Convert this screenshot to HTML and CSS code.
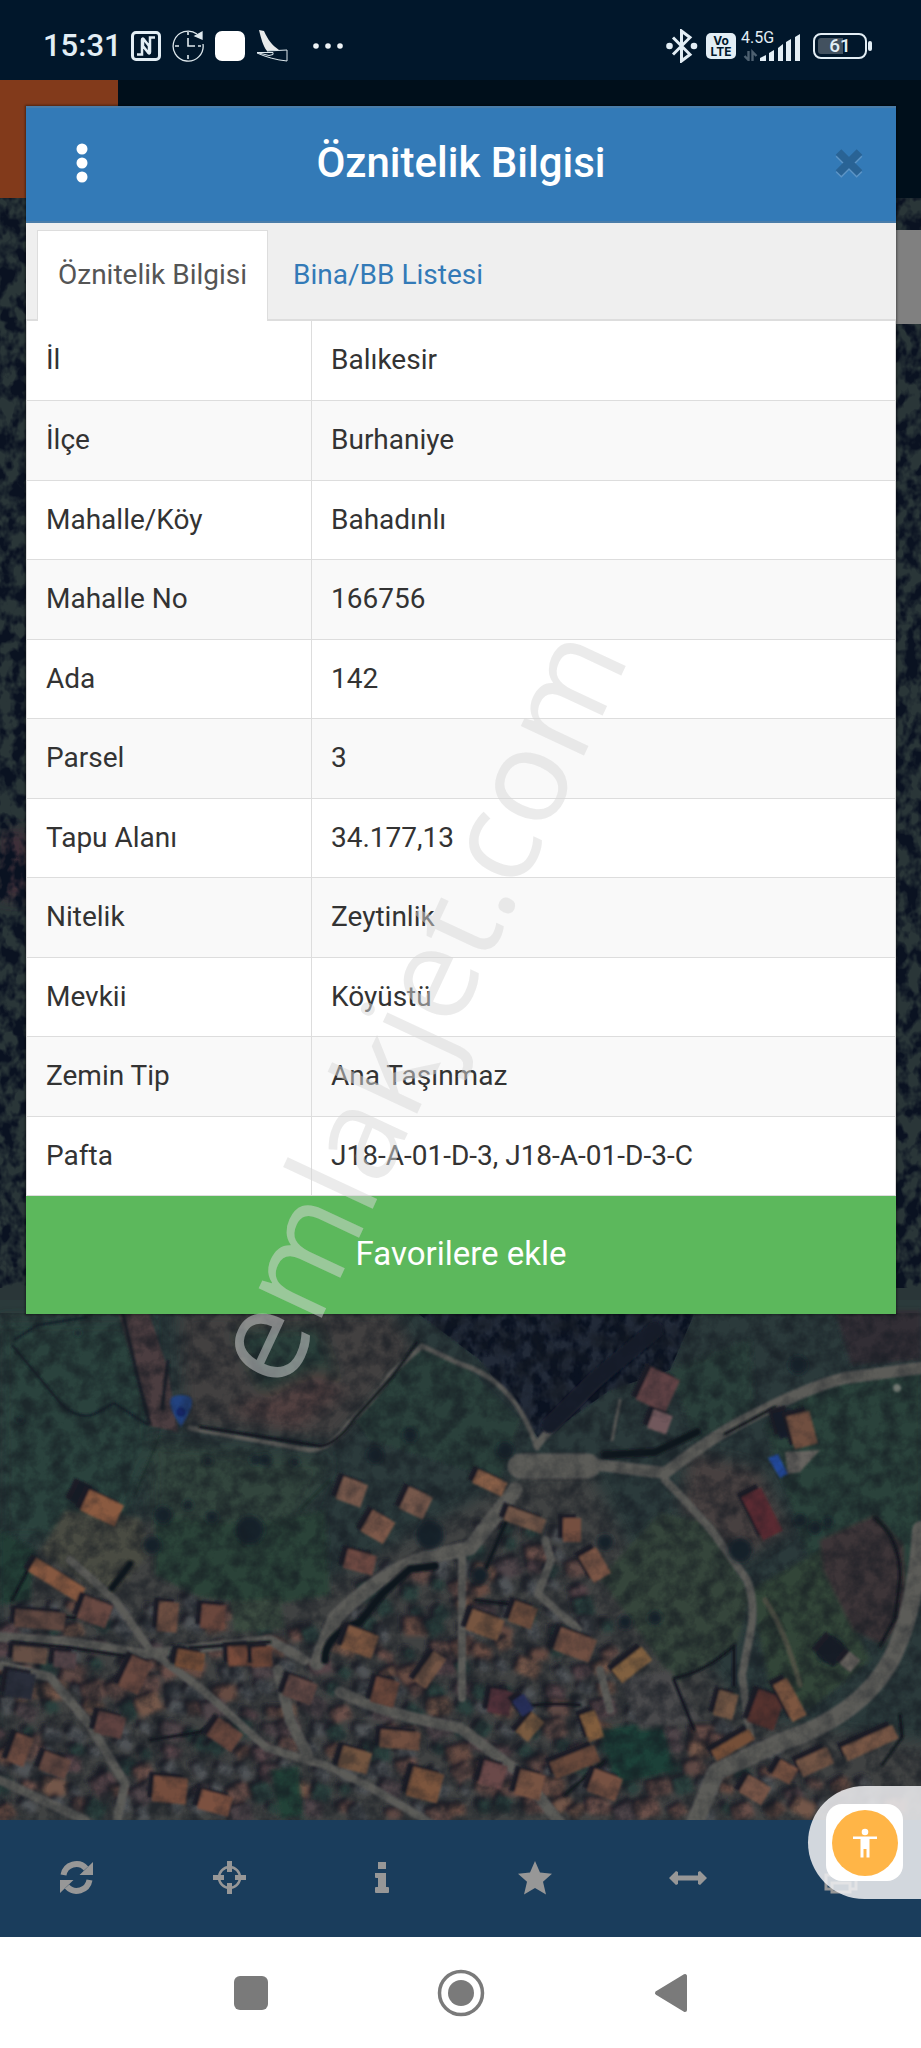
FILE: index.html
```html
<!DOCTYPE html>
<html lang="tr">
<head>
<meta charset="utf-8">
<meta name="viewport" content="width=device-width, initial-scale=1">
<title>Öznitelik Bilgisi</title>
<link rel="stylesheet" href="styles.css">
</head>
<body>
<header class="status">
  <div class="status-left">
    <span class="clock">15:31</span>
    <svg width="30" height="30" viewBox="0 0 30 30"><rect x="1.5" y="1.5" width="27" height="27" rx="3.5" fill="none" stroke="#e3eef5" stroke-width="3"/><path d="M6 23.500h5V9q0-2.500 2-.5l5 6.500v6M24 6.500h-5V21q0 2.500-2 .5l-5-6.500V9" fill="none" stroke="#e3eef5" stroke-width="2.500"/></svg>
    <svg class="gap-icon" width="32" height="32" viewBox="0 0 32 32" fill="none" stroke="#dfe9ee" stroke-width="1.300"><path d="M25 4A15 15 0 1 0 31 14"/><path d="M16 8v8h7M16 2v3M16 25v4M3 16h4M26 16h3" stroke-width="1.600"/><path d="M23 6l7-4v7z" fill="#dfe9ee"/></svg>
    <svg class="gap-icon" width="30" height="30" viewBox="0 0 30 30"><rect width="30" height="30" rx="7" fill="#fff"/></svg>
    <svg class="gap-icon" width="32" height="32" viewBox="0 0 32 32"><path d="M3 0l5 1c4 9 8 14 15 19l-12 1C7 16 5 8 3 0z" fill="#e8eaea"/><path d="M1 22.500h16v2l-4 1zM11 21l20-1v11C20 30 10 27 1 23" fill="none" stroke="#dfe9ee" stroke-width="1"/></svg>
    <svg class="gap-dots" width="30" height="30" viewBox="0 0 30 30" fill="#eef3f6"><circle cx="3" cy="15" r="2.800"/><circle cx="15" cy="15" r="2.800"/><circle cx="27" cy="15" r="2.800"/></svg>
  </div>
  <div class="status-right">
    <svg width="32" height="34" viewBox="0 0 32 34" fill="none" stroke="#e3eef5" stroke-width="3"><path d="M7 8.500l17 17-8.500 6.500V2L24 8.500 7 25.500"/><circle cx="3.500" cy="17" r="3.300" fill="#e3eef5" stroke="none"/><circle cx="28" cy="17" r="3.300" fill="#e3eef5" stroke="none"/></svg>
    <span class="volte"><span>Vo</span><span>LTE</span></span>
    <span class="signal">
      <span class="net">4.5G</span>
      <svg width="60" height="30" viewBox="0 0 60 30"><g fill="#e3eef5"><path d="M19 30v-3l6-3v6zM28 30v-8l5-3v11zM37 30V17l5-4v17zM45 30V11l5-3v22zM54 30V6l5-3v27z"/></g><path d="M7.500 20v9l-4-4M11.500 30v-9l4 4" fill="none" stroke="#4d6070" stroke-width="2.400"/></svg>
    </span>
    <span class="battery"><span>61</span></span>
  </div>
</header>

<main class="app">
  <div class="appbar"><span class="appbar-logo"></span></div>
  <div class="map">
    <svg id="map" class="map-art" viewBox="0 198 921 1622" preserveAspectRatio="xMidYMax slice" aria-hidden="true">
      <defs>
        <filter id="forest" x="0" y="0" width="1" height="1" color-interpolation-filters="sRGB"><feTurbulence type="fractalNoise" baseFrequency=".075 .06" numOctaves="3" seed="4"/><feColorMatrix values="0 0 0 0 .04  0 0 0 0 .07  0 0 0 0 .13  3.5 2 0 0 -2.3"/></filter>
        <filter id="grain" x="0" y="0" width="1" height="1" color-interpolation-filters="sRGB"><feTurbulence type="fractalNoise" baseFrequency=".06" numOctaves="4" seed="9"/><feColorMatrix values="0 0 0 0 .08  0 0 0 0 .10  0 0 0 0 .13  2 1 0 0 -1.200"/></filter>
        <filter id="soft"><feGaussianBlur stdDeviation="1"/></filter>
        <filter id="softer"><feGaussianBlur stdDeviation="2"/></filter>
        <filter id="wide"><feGaussianBlur stdDeviation="7"/></filter>
        <clipPath id="grove"><path d="M400 1300h300l-30 70-60 20-70 50-60-80z"/></clipPath>
      </defs>
      <rect y="198" width="921" height="1622" fill="#2b3a3b"/>
      <rect y="198" width="921" height="1102" fill="#2a3638"/>
      <g filter="url(#wide)">
        <path d="M0 1320h150v130l-30 90H0z" fill="#2b423e"/>
        <path d="M180 1310h210l25 40-80 90-150-15z" fill="#43413f"/>
        <path d="M230 1330l90-5 20 60-70 25z" fill="#2b403a"/>
        <path d="M230 1410l90-40 25 20-50 40z" fill="#51413f"/>
        <path d="M150 1440l180 20-40 90-140 20z" fill="#32453d"/>
        <path d="M0 1590l60-60 100-10 60 40 110 20 200-110h60l60 120 100 130 231 30v80H0z" fill="#414342"/>
        <path d="M0 830h30v70H0z" fill="#3d2e38"/>
        <path d="M690 1450l70 20 30 60-50 30-60-50z" fill="#46413f"/>
      </g>
      <rect y="198" width="921" height="1090" filter="url(#forest)"/>
      <g filter="url(#soft)">
        <path d="M400 1300h300l-30 70-60 20-70 50-60-80z" fill="#222c37"/>
        <path d="M420 1345l50 25 50 50-20 60-130-40-15-20z" fill="#293f3b"/>
        <path d="M118 1310h30l20 60 10 62-28-6z" fill="#4b3e40"/>
        <path d="M122 1310l14 60 14 55M168 1360l-6 50" fill="none" stroke="#1b2029" stroke-width="4"/>
        <path d="M14 1340l24-15 50-8M12 1345l50 60q20 18 38 6l14-8 34 22" fill="none" stroke="#16242a" stroke-width="3"/>
        <path d="M160 1435l-25 60M300 1510l30-30" fill="none" stroke="#20322f" stroke-width="2"/>
      </g>
      <g clip-path="url(#grove)"><rect x="400" y="1300" width="300" height="140" filter="url(#forest)"/></g>
      <g id="village" filter="url(#softer)"></g>
      <g filter="url(#softer)">
        <path d="M155 1515l95 10 75-15 5 85-60 10-70-8-45-22z" fill="#2b4339"/>
        <path d="M0 1530l35 20-5 50-30 5z" fill="#203e36"/>
        <path d="M65 1510l75 8 10 35-40 45-70-45z" fill="#4a4b42"/>
        <path d="M600 1578l60-65 50 10 40 70-12 50-62 40-40-55z" fill="#36443b"/>
        <path d="M670 1370l80-30 5 70-60 32z" fill="#2b403b"/>
        <path d="M765 1425l65-45 91-10v230l-40 50-20-75-50-10z" fill="#29423a"/>
        <path d="M750 1590l70-40 50 110-60 50-40-20z" fill="#314439"/>
        <path d="M820 1540l55-25 28 30 5 70-25 30-30-15-30-60z" fill="#3d3437"/>
        <path d="M835 1310h86v50l-70 5z" fill="#302e36"/>
        <path d="M600 1730l60-10 15 50-60 15z" fill="#1e4037"/>
        <path d="M270 1770l28-4 5 48-22 5z" fill="#214337"/>
        <path d="M230 1602l50-4 5 30-50 5z" fill="#3b4b41"/>
        <path d="M620 1680l50-10 30 50-60 10z" fill="#4a4a4b"/>
      </g>
      <rect y="1313" width="921" height="507" filter="url(#grain)" opacity=".4"/>
      <g fill="none" stroke="#5c5b59" stroke-linecap="round" stroke-linejoin="round" filter="url(#soft)">
        <path d="M190 1428l120 22q20 0 40-28 28-26 40-48l32-28 38 18q55 16 77 84" stroke-width="5"/>
        <path d="M537 1445q20-25 78-80" stroke-width="8"/>
        <path d="M525 1470l75-5 65 8q50-38 80-53 60-32 100-42l76-10" stroke-width="12"/>
        <path d="M520 1466h68" stroke-width="25"/>
        <path d="M665 1480q30 30 50 55l32 45q10 25 2 60l-7 35 8 60" stroke-width="8"/>
        <path d="M515 1490l-45 58-45 10q-45 15-90 60l-18 45" stroke-width="15"/>
        <path d="M0 1637l70 5 75 12 125-14 35 20" stroke-width="10"/>
        <path d="M70 1560l45 40 35 50 55 42 62 56 60 18 45 22 60 36" stroke-width="8"/>
        <path d="M0 1665l50 12 40 48 35 58-8 37M0 1780l85 40" stroke-width="9"/>
        <path d="M278 1670l12 50 18 35" stroke-width="11"/>
        <path d="M340 1692q45 22 120 36l60 45 40 50" stroke-width="11"/>
        <path d="M921 1530q-5 80-30 130-30 55-110 82l-65 30-20 48" stroke-width="18"/>
        <path d="M545 1540l6 20-13 34 40 35M462 1558v140M600 1670l10 40" stroke-width="8"/>
        <path d="M765 1600q20 30 35 85" stroke="#4f5144" stroke-width="5"/>
        <path d="M620 1400l-8 40" stroke-width="3"/>
      </g>
      <g fill="none" stroke="#11151f" stroke-linecap="round" filter="url(#soft)">
        <path d="M200 1427l120 19q18-2 35-28l38-42 24-34" stroke-width="3"/>
        <path d="M655 1330l-60 50-45 45" stroke-width="17" stroke="#141a2b"/>
        <path d="M605 1455l50-3 42-20M325 1660q0-25 35-38l22-28 28-25 25-3" stroke-width="8"/>
        <path d="M725 1434l50-27" stroke-width="3"/>
        <path d="M512 1508l-26 60" stroke-width="4"/>
        <path d="M674 1678q30-5 60-32v40M674 1680l20 50M875 1518q25 20 25 60l-5 40-15 28" stroke-width="3"/>
        <path d="M20 1612l55 6 18-14M12 1600l20-38M12 1642l60 6 60 9M190 1648l80-6M150 1740l50-8 16-10M475 1600l50 6M520 1708q20-6 60-3M565 1795l40-35M900 1715l2 22-20 28" stroke-width="3"/>
        <path d="M112 1588l18-24" stroke-width="7"/>
      </g>
      <g id="trees" fill="#14212a" filter="url(#softer)"></g>
      <g id="houses" filter="url(#soft)"></g>
      <g filter="url(#soft)">
        <path d="M768 1458l10-4 10 20-8 4z" fill="#234a9c"/>
        <path d="M785 1452l35-2-20 22-12 2z" fill="#66645f"/>
        <path d="M170 1402q0-7 11-7t11 7q0 8-11 25-11-17-11-25z" fill="#23437f"/>
        <circle cx="181" cy="1412" r="5" fill="#122765"/>
        <circle cx="897" cy="1388" r="4" fill="#747c75"/>
      </g>
      <rect y="1313" width="921" height="507" filter="url(#grain)" opacity=".35"/>
    </svg>
    <span class="map-panel"></span>
  </div>
  <nav class="toolbar" aria-label="Harita araçları">
    <button aria-label="Yenile"><svg width="33" height="33" viewBox="0 0 33 33"><g fill="none" stroke="#979797" stroke-width="6"><path d="M3.500 14A13 13 0 0 1 26 7.500M29.500 19A13 13 0 0 1 7 25.500"/></g><path d="M33 1v13H19.500zM0 32V19h13.500z" fill="#979797"/></svg></button>
    <button aria-label="Konum"><svg width="33" height="33" viewBox="0 0 33 33"><circle cx="16.500" cy="16.500" r="10.500" fill="none" stroke="#979797" stroke-width="2.500"/><path d="M14 0h5v11h-5zM14 22h5v11h-5zM0 14h11v5H0zM22 14h11v5H22z" fill="#979797"/></svg></button>
    <button aria-label="Bilgi"><svg width="16" height="31" viewBox="0 0 16 31"><path d="M4 0h8v7H4zM1 11h11v14h2q1 0 1 1v4q0 1-1 1H2q-1 0-1-1v-4q0-1 1-1h2v-9H2q-1 0-1-1z" fill="#979797"/></svg></button>
    <button aria-label="Favoriler"><svg width="36" height="36" viewBox="0 0 36 36"><path d="M18 1l5 11.500 12 1.200-9 8 3 12.800-11-6.500L7 34.500l3-12.800-9-8 12-1.200z" fill="#979797"/></svg></button>
    <button aria-label="Ölç"><svg width="38" height="16" viewBox="0 0 38 16"><path d="M0 8l7-7 2 1v3.500h20V2l2-1 7 7-7 7-2-1v-3.500H9V14l-2 1z" fill="#979797"/></svg></button>
    <button aria-label="Yazdır"><svg width="34" height="34" viewBox="0 0 34 34" fill="none" stroke="#979797" stroke-width="3"><path d="M8 14V3h18v11M8 28H2V14h30v14h-6M8 22h18v9H8z"/></svg></button>
  </nav>

  <section class="modal" role="dialog" aria-labelledby="title">
    <header class="modal-head">
      <button class="menu" aria-label="Menü"><svg width="12" height="40" viewBox="0 0 12 40" fill="#fff"><circle cx="6" cy="6" r="5.500"/><circle cx="6" cy="20" r="5.500"/><circle cx="6" cy="34" r="5.500"/></svg></button>
      <h1 id="title">Öznitelik Bilgisi</h1>
      <button class="close" aria-label="Kapat"><svg width="30" height="32" viewBox="0 0 30 32"><path d="M4.500 7l21 21M25.500 7l-21 21" stroke="#5c94c6" stroke-width="8"/><path d="M4.500 5l21 21M25.500 5l-21 21" stroke="#296395" stroke-width="8"/></svg></button>
    </header>
    <div class="tabs" role="tablist">
      <button class="tab tab-active" role="tab" aria-selected="true">Öznitelik Bilgisi</button>
      <button class="tab" role="tab" aria-selected="false">Bina/BB Listesi</button>
    </div>
    <table class="props">
      <tbody>
        <tr><th scope="row">İl</th><td>Balıkesir</td></tr>
        <tr><th scope="row">İlçe</th><td>Burhaniye</td></tr>
        <tr><th scope="row">Mahalle/Köy</th><td>Bahadınlı</td></tr>
        <tr><th scope="row">Mahalle No</th><td>166756</td></tr>
        <tr><th scope="row">Ada</th><td>142</td></tr>
        <tr><th scope="row">Parsel</th><td>3</td></tr>
        <tr><th scope="row">Tapu Alanı</th><td>34.177,13</td></tr>
        <tr><th scope="row">Nitelik</th><td>Zeytinlik</td></tr>
        <tr><th scope="row">Mevkii</th><td>Köyüstü</td></tr>
        <tr><th scope="row">Zemin Tip</th><td>Ana Taşınmaz</td></tr>
        <tr><th scope="row">Pafta</th><td>J18-A-01-D-3, J18-A-01-D-3-C</td></tr>
      </tbody>
    </table>
    <button class="favorite">Favorilere ekle</button>
  </section>

  <button class="access" aria-label="Erişilebilirlik">
    <span class="access-tile"><svg width="66" height="66" viewBox="0 0 66 66"><circle cx="33" cy="33" r="33" fill="#ffb547"/><g fill="#fff"><circle cx="33" cy="22" r="3.300"/><path d="M21 26.500h24v2.500h-7.500v18.500H34.500V39h-3v8.500h-3V29H21z"/></g></svg></span>
  </button>
</main>

<nav class="sysnav" aria-label="Sistem">
  <button aria-label="Son uygulamalar"><svg width="34" height="34" viewBox="0 0 34 34"><rect width="34" height="34" rx="6" fill="#7a7a7a"/></svg></button>
  <button aria-label="Ana ekran"><svg width="48" height="48" viewBox="0 0 48 48"><circle cx="24" cy="24" r="21.500" fill="none" stroke="#7a7a7a" stroke-width="3.500"/><circle cx="24" cy="24" r="13" fill="#7a7a7a"/></svg></button>
  <button aria-label="Geri"><svg width="34" height="40" viewBox="0 0 34 40"><path d="M31 3v34L3 20z" fill="#7a7a7a" stroke="#7a7a7a" stroke-width="4" stroke-linejoin="round"/></svg></button>
</nav>
<div class="watermark" aria-hidden="true"><span>emlakjet.com</span></div>
<script src="map.js"></script>
</body>
</html>
```
FILE: styles.css
```css
* { box-sizing: border-box; }
body {
  margin: 0;
  min-height: 100vh;
  display: flex;
  flex-direction: column;
  position: relative;
  overflow-x: hidden;
  font-family: Roboto, "Noto Sans", sans-serif;
  font-size: 28px;
  color: #333;
  background: #fff;
}
button {
  font: inherit;
  color: inherit;
  border: 0;
  padding: 0;
  background: none;
  cursor: pointer;
}
svg { display: block; flex: none; }

/* Status bar */
.status {
  height: 80px;
  padding: 12px 54px 0 43px;
  display: flex;
  justify-content: space-between;
  align-items: center;
  background: #01172b;
  color: #e3eef5;
}
.status-left, .status-right { display: flex; align-items: center; }
.clock { font-size: 31px; font-weight: 500; line-height: 36px; margin-right: 9px; }
.gap-icon { margin-left: 11px; }
.gap-dots { margin-left: 25px; }
.volte {
  width: 30px;
  height: 26px;
  margin-left: 8px;
  border-radius: 5px;
  background: #e3eef5;
  color: #01172b;
  display: flex;
  flex-direction: column;
  justify-content: center;
  align-items: center;
  font: 700 12px/11px Inter, sans-serif;
}
.signal { display: grid; margin-left: 5px; }
.signal > * { grid-area: 1 / 1; }
.net { font-size: 16px; line-height: 14px; }
.battery {
  position: relative;
  width: 54px;
  height: 26px;
  margin-left: 12px;
  border: 2px solid #e3eef5;
  border-radius: 8px;
  display: grid;
  place-items: center;
  background: linear-gradient(90deg, #42515f 56%, transparent 56%) content-box;
  padding: 3px;
  font-size: 19px;
  font-weight: 500;
  line-height: 16px;
}
.battery::after {
  content: "";
  position: absolute;
  right: -7px;
  top: 6px;
  width: 4px;
  height: 10px;
  border-radius: 2px;
  background: #e3eef5;
}

/* Map application */
.app {
  flex: 1;
  position: relative;
  display: flex;
  flex-direction: column;
}
.appbar { height: 118px; display: flex; background: #000f1b; }
.appbar-logo { width: 118px; background: #823a1b; }
.map { flex: 1; position: relative; overflow: hidden; min-height: 1300px; }
.map-art { position: absolute; inset: 0; width: 100%; height: 100%; }
.map-panel { position: absolute; top: 32px; right: 0; width: 60px; height: 94px; background: #808080; }
.toolbar {
  height: 117px;
  padding: 0 4px 2px 0;
  display: grid;
  grid-template-columns: repeat(6, 1fr);
  background: #1a3d5c;
}
.toolbar button { display: grid; place-items: center; }

/* Dialog */
.modal {
  position: absolute;
  top: 26px;
  left: 26px;
  right: 25px;
  background: #fff;
  box-shadow: 0 0 2px 1px rgba(0, 0, 0, .4);
}
.modal-head {
  height: 117px;
  padding: 0 32px 3px;
  display: grid;
  grid-template-columns: 48px 1fr 48px;
  align-items: center;
  background: #337ab7;
  border: solid #4a7da9;
  border-width: 2px 0;
  color: #fff;
}
.menu { justify-self: center; }
.close { justify-self: end; }
.modal-head h1 {
  margin: 0;
  font-size: 42px;
  line-height: 48px;
  font-weight: 500;
  text-align: center;
}
.tabs {
  height: 98px;
  padding: 7px 11px 0;
  display: flex;
  gap: 4px;
  background: #efefef;
  border-bottom: 2px solid #ddd;
}
.tab {
  padding: 0 20px 2px;
  border: 1px solid transparent;
  border-bottom: 0;
  color: #337ab7;
}
.tab-active { margin-bottom: -2px; padding-bottom: 4px; background: #fff; border-color: #ddd; color: #555; }
.props { width: 100%; border-collapse: collapse; table-layout: fixed; }
.props tr { height: 79px; }
.props tr:nth-child(even) { height: 80px; background: #f9f9f9; }
.props th, .props td {
  padding: 0 19px;
  border: 1px solid #ddd;
  border-top: 0;
  font-weight: 400;
  text-align: left;
  line-height: 40px;
}
.props th { width: 285px; }
.favorite {
  display: block;
  width: 100%;
  height: 118px;
  padding-bottom: 2px;
  background: #5cb85c;
  color: #fff;
  font-size: 33px;
}

/* Accessibility shortcut */
.access {
  position: absolute;
  right: 0;
  bottom: 38px;
  padding: 18px;
  border-radius: 57px 0 0 57px;
  background: rgba(238, 238, 240, .87);
}
.access-tile {
  width: 77px;
  height: 77px;
  border-radius: 16px;
  background: #fff;
  display: grid;
  place-items: center;
}

/* System navigation */
.sysnav {
  height: 111px;
  display: flex;
  justify-content: center;
  gap: 162px;
  background: #fff;
}
.sysnav button { width: 48px; display: grid; place-items: center; }

.watermark {
  position: absolute;
  inset: 0;
  padding: 0 96px 40px 0;
  display: grid;
  place-items: center;
  overflow: hidden;
  pointer-events: none;
}
.watermark span {
  font: 400 130px/130px "Open Sans", sans-serif;
  color: rgba(216, 216, 216, .5);
  transform: rotate(-65deg);
}
```
FILE: map.js
```js
const NS = 'http://www.w3.org/2000/svg';
const roofs = ['#6b5049', '#5f4844', '#73564a', '#564549', '#664b43', '#4f4549'];

function poly(parent, points, fill) {
  const p = document.createElementNS(NS, 'polygon');
  p.setAttribute('points', points);
  p.setAttribute('fill', fill);
  parent.appendChild(p);
}

// A roof is a rotated box with a shadow on its north-west side.
function roof(parent, x, y, w, h, deg, fill) {
  const a = deg * Math.PI / 180;
  const c = Math.cos(a), s = Math.sin(a);
  const box = (ox, oy) => [[-1, -1], [1, -1], [1, 1], [-1, 1]]
    .map(([i, j]) => {
      const u = i * w / 2, v = j * h / 2;
      return (x + ox + u * c - v * s).toFixed(1) + ',' + (y + oy + u * s + v * c).toFixed(1);
    }).join(' ');
  poly(parent, box(-5, -4), '#1b1e27');
  poly(parent, box(0, 0), fill);
}

let seed = 17;
const rnd = () => (seed = (seed * 16807) % 2147483647) / 2147483647;

// Top edge of the built-up area at each x.
const edge = [[0, 1610], [90, 1595], [150, 1590], [230, 1605], [320, 1635], [380, 1570], [440, 1560],
  [480, 1525], [560, 1530], [590, 1580], [620, 1650], [670, 1720], [740, 1730], [800, 1765], [921, 1800]];
function villageTop(x) {
  for (let i = 1; i < edge.length; i++) {
    const [x0, y0] = edge[i - 1], [x1, y1] = edge[i];
    if (x <= x1) return y0 + (y1 - y0) * (x - x0) / (x1 - x0);
  }
  return 1800;
}
const village = document.getElementById('village');
for (let gy = 1530; gy < 1825; gy += 20) {
  for (let gx = 5; gx < 915; gx += 24) {
    const x = gx + rnd() * 14 - 7, y = gy + rnd() * 12 - 6, k = rnd();
    if (y < villageTop(x)) continue;
    const size = 9 + rnd() * 10;
    if (k < .5) roof(village, x, y, size + 5, size - 1, -35 + rnd() * 60, roofs[Math.floor(rnd() * 6)]);
    else if (k < .75) roof(village, x, y, size, size, rnd() * 90, '#2b403c');
    else roof(village, x, y, size, size * .7, rnd() * 90, '#505257');
  }
}

const trees = document.getElementById('trees');
[[163, 1515, 9], [250, 1530, 14], [152, 1545, 9], [188, 1505, 5], [212, 1517, 6], [208, 1461, 4],
  [265, 1460, 6], [255, 1460, 5], [295, 1462, 4], [78, 1333, 3], [605, 1542, 8], [480, 1575, 9], [798, 1365, 9],
  [830, 1650, 14], [20, 1420, 3], [180, 1655, 10], [655, 1618, 7], [505, 1450, 8], [410, 1435, 7], [375, 1455, 8],
  [430, 1535, 14], [800, 1520, 6], [815, 1528, 6], [828, 1522, 5], [740, 1550, 12], [625, 1622, 7]
].forEach(([x, y, r]) => {
  const c = document.createElementNS(NS, 'circle');
  c.setAttribute('cx', x);
  c.setAttribute('cy', y);
  c.setAttribute('r', r);
  trees.appendChild(c);
});

const houses = document.getElementById('houses');
[[84, 1496, 20, 22, 25, '#171a28'], [102, 1508, 38, 23, 25, '#8a5a40'], [57, 1580, 58, 16, 32, '#86593f'],
  [352, 1492, 26, 24, 20, '#76594c'], [416, 1503, 26, 24, 25, '#76594c'], [378, 1527, 26, 25, 30, '#7b5848'],
  [360, 1562, 30, 20, 15, '#6d4a42'], [658, 1390, 32, 36, 25, '#604245'], [660, 1422, 20, 20, 20, '#71595b'],
  [490, 1483, 32, 15, 25, '#8d6248'], [762, 1514, 22, 48, -27, '#5a2a30'], [785, 1424, 18, 26, -15, '#181b2b'],
  [802, 1430, 24, 34, -15, '#70503f'], [525, 1520, 40, 15, 20, '#6f5546'], [572, 1530, 18, 24, 0, '#74503f'],
  [595, 1565, 20, 30, -30, '#7a5544'], [213, 1617, 24, 24, 5, '#6b463e'], [168, 1617, 20, 30, 5, '#6e5043'],
  [240, 1656, 24, 20, -3, '#784c3a'], [262, 1657, 20, 20, -3, '#6e4638'], [190, 1660, 28, 18, 10, '#785038'],
  [30, 1655, 34, 16, 5, '#665045'], [65, 1660, 22, 16, 5, '#554448'], [40, 1620, 50, 18, 5, '#5e463f'],
  [95, 1612, 30, 24, 20, '#694a42'], [135, 1675, 22, 34, 25, '#6b4a40'], [20, 1685, 28, 26, 10, '#292d3b'],
  [360, 1642, 32, 24, 20, '#7c573f'], [430, 1670, 15, 36, 35, '#735545'], [385, 1692, 24, 26, 15, '#6b463b'],
  [632, 1665, 38, 17, -38, '#80603f'], [485, 1625, 34, 22, 20, '#765540'], [523, 1615, 24, 22, 20, '#6d4d3c'],
  [575, 1645, 38, 24, 20, '#6f5042'], [766, 1710, 28, 34, 20, '#54302e'], [790, 1700, 16, 42, -28, '#7d563f'],
  [726, 1705, 20, 26, 15, '#745845'], [733, 1745, 44, 12, -30, '#745039'], [530, 1727, 16, 26, 40, '#785a40'],
  [592, 1726, 16, 28, -20, '#815d3c'], [575, 1762, 48, 18, -22, '#69493b'], [870, 1743, 56, 15, -24, '#775744'],
  [815, 1762, 34, 18, -25, '#735445'], [785, 1772, 20, 18, 30, '#795342'], [755, 1790, 26, 20, 30, '#7b5848'],
  [500, 1702, 22, 24, 10, '#54333a'], [523, 1705, 14, 18, -35, '#262e59'], [605, 1785, 30, 24, 20, '#765143'],
  [493, 1775, 24, 24, 15, '#6b4948'], [530, 1785, 26, 26, 15, '#775243'], [170, 1790, 34, 26, 5, '#744e3d'],
  [215, 1803, 32, 20, 15, '#7c5141'], [225, 1735, 30, 22, 35, '#67463e'], [110, 1725, 28, 22, 15, '#5e433f'],
  [425, 1785, 32, 30, 15, '#7c553c'], [400, 1740, 40, 18, 5, '#71503f'], [355, 1760, 30, 22, 15, '#735540'],
  [20, 1750, 18, 30, 20, '#6c4c41'], [55, 1765, 28, 20, 20, '#62463f'], [832, 1651, 22, 22, 40, '#171a26'],
  [850, 1662, 14, 16, 40, '#66625d'], [300, 1690, 30, 22, 20, '#634945']
].forEach(h => roof(houses, ...h));
```
